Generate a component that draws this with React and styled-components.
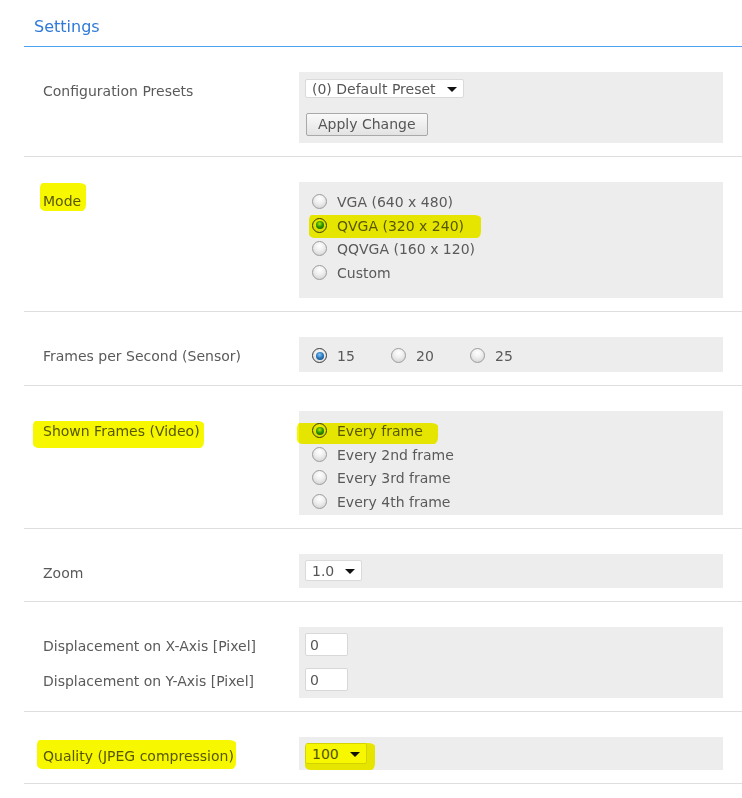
import React from "react";
import styled, { createGlobalStyle, css } from "styled-components";

const GlobalStyle = createGlobalStyle`
  html, body { margin: 0; padding: 0; background: #ffffff; }
  body {
    font-family: "DejaVu Sans", Verdana, sans-serif;
    font-size: 14px;
    color: #5a5a5a;
  }
`;

const Page = styled.div`
  margin-left: 24px;
  width: 718px;
`;

const Header = styled.div`
  height: 47px;
  box-sizing: border-box;
  padding: 17px 0 0 10px;
  border-bottom: 1px solid #4da2f2;
  font-size: 16px;
  line-height: 20px;
  color: #2f7ad8;
`;

const Row = styled.div`
  display: grid;
  grid-template-columns: 256px 1fr;
  padding: 25px 19px 13px 19px;
  border-bottom: 1px solid #dedede;
`;

const LabelCol = styled.div`
  display: flex;
  flex-direction: column;
  align-items: flex-start;
  gap: ${(p) => p.$gap || 0}px;
  padding-top: ${(p) => p.$pt ?? 11}px;
`;

const Label = styled.span`
  line-height: 17px;
  white-space: nowrap;
`;

const Box = styled.div`
  background: #ededed;
  box-sizing: border-box;
  height: ${(p) => p.$h}px;
  padding: ${(p) => p.$pt || 6}px 6px 0 6px;
  display: flex;
  flex-direction: ${(p) => (p.$row ? "row" : "column")};
  align-items: flex-start;
  gap: ${(p) => p.$gap || 0}px;
`;

const Highlight = styled.span`
  position: relative;
  display: inline-flex;
  &::after {
    content: "";
    position: absolute;
    top: ${(p) => p.$t}px;
    right: ${(p) => p.$r}px;
    bottom: ${(p) => p.$b}px;
    left: ${(p) => p.$l}px;
    background: #f7f700;
    mix-blend-mode: multiply;
    border-radius: 3px 7px 4px 6px / 5px 3px 7px 4px;
    pointer-events: none;
  }
`;

const SelectBox = styled.div`
  display: inline-flex;
  align-items: center;
  gap: 11px;
  height: ${(p) => p.$h || 21}px;
  box-sizing: border-box;
  padding: 1px 6px 0 6px;
  background: #ffffff;
  border: 1px solid #dadada;
  border-radius: 2px;
  color: #555555;
  line-height: 17px;
  white-space: nowrap;
`;

const Arrow = styled.span`
  width: 0;
  height: 0;
  border-left: 5px solid transparent;
  border-right: 5px solid transparent;
  border-top: 5px solid #111111;
`;

const Button = styled.button`
  font-family: inherit;
  font-size: 14px;
  color: #555555;
  height: 23px;
  margin-left: 1px;
  padding: 0 11px;
  border: 1px solid #a9a9a9;
  border-radius: 2px;
  background: linear-gradient(#fafafa, #e3e3e3);
  line-height: 19px;
`;

const TextInput = styled.input`
  width: 43px;
  height: 23px;
  box-sizing: border-box;
  border: 1px solid #d8d8d8;
  border-radius: 2px;
  padding: 0 0 0 4px;
  font-family: inherit;
  font-size: 14px;
  color: #555555;
  background: #ffffff;
  outline: none;
`;

const RadioList = styled.div`
  display: flex;
  flex-direction: column;
  align-items: flex-start;
`;

const RadioInline = styled.div`
  display: flex;
`;

const Option = styled.span`
  display: inline-flex;
  align-items: center;
  height: 23.5px;
  line-height: 17px;
  white-space: nowrap;
  ${(p) =>
    p.$w &&
    css`
      width: ${p.$w}px;
    `}
`;

const Circle = styled.span`
  position: relative;
  box-sizing: border-box;
  width: 15px;
  height: 15px;
  margin: 0 10px 0 7px;
  border-radius: 50%;
  transform: translateY(-1px);
  ${(p) =>
    p.$on
      ? css`
          border: 1px solid #3c3c3c;
          background: radial-gradient(circle at 50% 40%, #ffffff, #d6d6d6);
          &::after {
            content: "";
            position: absolute;
            left: 2.5px;
            top: 2.5px;
            width: 8px;
            height: 8px;
            border-radius: 50%;
            background: ${p.$blue
              ? "radial-gradient(circle at 45% 35%, #8cc6f2 0, #2c7cc0 45%, #0b3a66 100%)"
              : "radial-gradient(circle at 45% 35%, #b6f08a 0, #2f9a0c 45%, #0d4a00 100%)"};
          }
        `
      : css`
          border: 1px solid #9c9c9c;
          background: radial-gradient(circle at 50% 30%, #ffffff 0, #f0f0f0 40%, #cdcdcd 100%);
        `}
`;

const Radio = ({ on, blue, children, w }) => (
  <Option $w={w}>
    <Circle $on={on} $blue={blue} />
    {children}
  </Option>
);

export default function App() {
  return (
    <>
      <GlobalStyle />
      <Page>
        <Header>Settings</Header>

        <Row>
          <LabelCol>
            <Label>Configuration Presets</Label>
          </LabelCol>
          <Box $h={71} $pt={7} $gap={15}>
            <SelectBox $h={19}>
              (0) Default Preset
              <Arrow />
            </SelectBox>
            <Button>Apply Change</Button>
          </Box>
        </Row>

        <Row>
          <LabelCol>
            <Highlight $t={-10} $r={-5} $b={-1} $l={-3}>
              <Label>Mode</Label>
            </Highlight>
          </LabelCol>
          <Box $h={116} $pt={9}>
            <RadioList>
              <Radio>VGA (640 x 480)</Radio>
              <Highlight $t={0} $r={-17} $b={0} $l={4}>
                <Radio on>QVGA (320 x 240)</Radio>
              </Highlight>
              <Radio>QQVGA (160 x 120)</Radio>
              <Radio>Custom</Radio>
            </RadioList>
          </Box>
        </Row>

        <Row>
          <LabelCol>
            <Label>Frames per Second (Sensor)</Label>
          </LabelCol>
          <Box $h={35} $pt={8}>
            <RadioInline>
              <Radio on blue w={79}>
                15
              </Radio>
              <Radio w={79}>20</Radio>
              <Radio w={79}>25</Radio>
            </RadioInline>
          </Box>
        </Row>

        <Row>
          <LabelCol $pt={12}>
            <Highlight $t={-2} $r={-4} $b={-8} $l={-10}>
              <Label>Shown Frames (Video)</Label>
            </Highlight>
          </LabelCol>
          <Box $h={104} $pt={9}>
            <RadioList>
              <Highlight $t={3} $r={-15} $b={0} $l={-8}>
                <Radio on>Every frame</Radio>
              </Highlight>
              <Radio>Every 2nd frame</Radio>
              <Radio>Every 3rd frame</Radio>
              <Radio>Every 4th frame</Radio>
            </RadioList>
          </Box>
        </Row>

        <Row>
          <LabelCol>
            <Label>Zoom</Label>
          </LabelCol>
          <Box $h={34} $pt={6}>
            <SelectBox>
              1.0
              <Arrow />
            </SelectBox>
          </Box>
        </Row>

        <Row>
          <LabelCol $gap={18}>
            <Label>Displacement on X-Axis [Pixel]</Label>
            <Label>Displacement on Y-Axis [Pixel]</Label>
          </LabelCol>
          <Box $h={71} $pt={6} $gap={12}>
            <TextInput defaultValue="0" />
            <TextInput defaultValue="0" />
          </Box>
        </Row>

        <Row>
          <LabelCol>
            <Highlight $t={-8} $r={-2} $b={-4} $l={-6}>
              <Label>Quality (JPEG compression)</Label>
            </Highlight>
          </LabelCol>
          <Box $h={33} $pt={6}>
            <Highlight $t={0} $r={-8} $b={-6} $l={0}>
              <SelectBox>
                100
                <Arrow />
              </SelectBox>
            </Highlight>
          </Box>
        </Row>
      </Page>
    </>
  );
}
